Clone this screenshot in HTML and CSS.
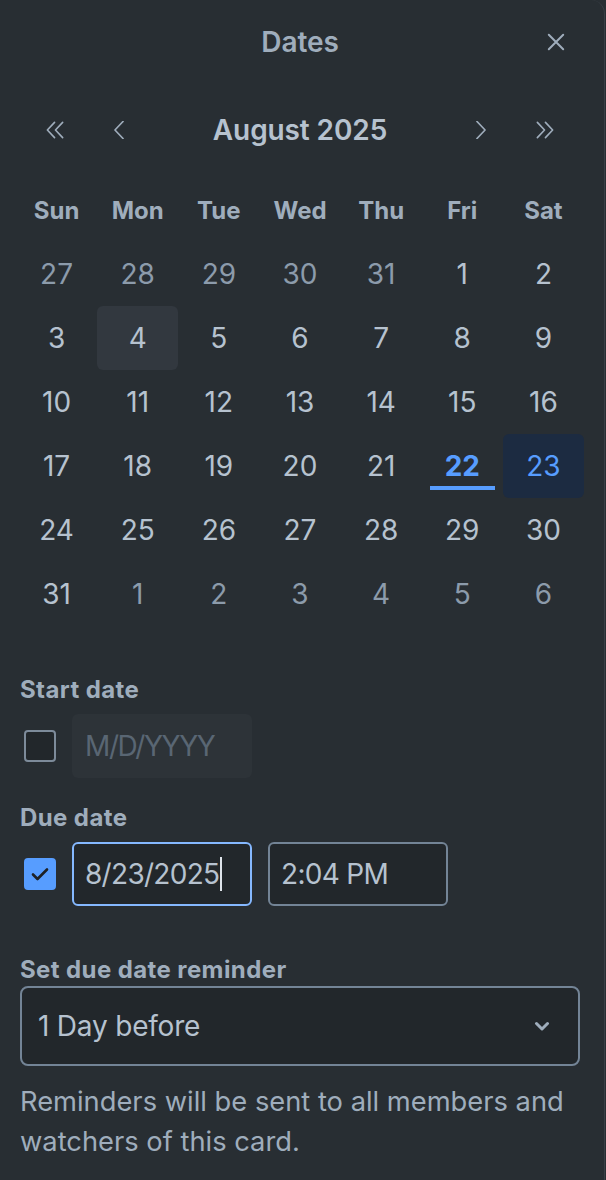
FILE: index.html
```html
<!DOCTYPE html>
<html lang="en">
<head>
<meta charset="utf-8">
<title>Dates</title>
<link rel="stylesheet" href="styles.css">
</head>
<body>
<div class="panel">
  <header class="head">
    <span class="head-spacer"></span>
    <h1 class="title">Dates</h1>
    <button class="icon-btn close" aria-label="Close">
      <svg width="20" height="20" viewBox="0 0 20 20"><path d="M2 2 L18 18 M18 2 L2 18" stroke="currentColor" stroke-width="2.2" stroke-linecap="round" fill="none"/></svg>
    </button>
  </header>

  <div class="nav">
    <button class="icon-btn nav-btn" aria-label="Previous year">
      <svg width="20" height="20" viewBox="0 0 20 20"><path d="M9.5 1.5 L1.5 10 L9.5 18.5 M18.5 1.5 L10.5 10 L18.5 18.5" stroke="currentColor" stroke-width="1.8" stroke-linecap="round" stroke-linejoin="round" fill="none"/></svg>
    </button>
    <button class="icon-btn nav-btn" aria-label="Previous month">
      <svg width="20" height="20" viewBox="0 0 20 20"><path d="M14.5 0.5 L5.5 10 L14.5 19.5" stroke="currentColor" stroke-width="1.8" stroke-linecap="round" stroke-linejoin="round" fill="none"/></svg>
    </button>
    <div class="month">August 2025</div>
    <button class="icon-btn nav-btn" aria-label="Next month">
      <svg width="20" height="20" viewBox="0 0 20 20"><path d="M5.5 0.5 L14.5 10 L5.5 19.5" stroke="currentColor" stroke-width="1.8" stroke-linecap="round" stroke-linejoin="round" fill="none"/></svg>
    </button>
    <button class="icon-btn nav-btn" aria-label="Next year">
      <svg width="20" height="20" viewBox="0 0 20 20"><path d="M1.5 1.5 L9.5 10 L1.5 18.5 M10.5 1.5 L18.5 10 L10.5 18.5" stroke="currentColor" stroke-width="1.8" stroke-linecap="round" stroke-linejoin="round" fill="none"/></svg>
    </button>
  </div>

  <div class="cal">
    <div class="wd">Sun</div><div class="wd">Mon</div><div class="wd">Tue</div><div class="wd">Wed</div><div class="wd">Thu</div><div class="wd">Fri</div><div class="wd">Sat</div>

    <div class="day out">27</div><div class="day out">28</div><div class="day out">29</div><div class="day out">30</div><div class="day out">31</div><div class="day">1</div><div class="day">2</div>
    <div class="day">3</div><div class="day hover">4</div><div class="day">5</div><div class="day">6</div><div class="day">7</div><div class="day">8</div><div class="day">9</div>
    <div class="day">10</div><div class="day">11</div><div class="day">12</div><div class="day">13</div><div class="day">14</div><div class="day">15</div><div class="day">16</div>
    <div class="day">17</div><div class="day">18</div><div class="day">19</div><div class="day">20</div><div class="day">21</div><div class="day today">22</div><div class="day selected">23</div>
    <div class="day">24</div><div class="day">25</div><div class="day">26</div><div class="day">27</div><div class="day">28</div><div class="day">29</div><div class="day">30</div>
    <div class="day">31</div><div class="day out">1</div><div class="day out">2</div><div class="day out">3</div><div class="day out">4</div><div class="day out">5</div><div class="day out">6</div>
  </div>

  <section class="field field-start">
    <div class="label">Start date</div>
    <div class="row">
      <span class="check"></span>
      <div class="input disabled">M/D/YYYY</div>
    </div>
  </section>

  <section class="field field-due">
    <div class="label">Due date</div>
    <div class="row">
      <span class="check checked">
        <svg width="18" height="14" viewBox="0 0 18 14"><path d="M2 7.5 L6.5 12 L16 2.5" stroke="currentColor" stroke-width="2.6" stroke-linecap="round" stroke-linejoin="round" fill="none"/></svg>
      </span>
      <div class="input focus">8/23/2025<span class="caret"></span></div>
      <div class="input">2:04 PM</div>
    </div>
  </section>

  <section class="field field-reminder">
    <div class="label">Set due date reminder</div>
    <div class="select">
      <span>1 Day before</span>
      <svg width="16" height="10" viewBox="0 0 16 10"><path d="M2.5 2.5 L8 8 L13.5 2.5" stroke="currentColor" stroke-width="3" stroke-linecap="round" stroke-linejoin="round" fill="none"/></svg>
    </div>
    <p class="help">Reminders will be sent to all members and watchers of this card.</p>
  </section>
</div>
</body>
</html>
```

FILE: styles.css
```css
* { box-sizing: border-box; }

html, body {
  margin: 0;
  padding: 0;
  background: #282e33;
}

body {
  font-family: Inter, "Noto Sans", "Liberation Sans", sans-serif;
  color: #b6c2cf;
  -webkit-font-smoothing: antialiased;
}

.panel {
  width: 605px;
  min-height: 1180px;
  padding: 0 24px 0 20px;
  background: #282e33;
  border-right: 1px solid #3a4047;
  border-top-right-radius: 14px;
}

.icon-btn {
  border: 0;
  background: transparent;
  color: #9fadbc;
  padding: 0;
  display: flex;
  align-items: center;
  justify-content: center;
  cursor: pointer;
}

/* header */
.head {
  height: 84px;
  display: grid;
  grid-template-columns: 48px 1fr 48px;
  align-items: center;
}
.title {
  margin: 0;
  text-align: center;
  font-size: 28px;
  font-weight: 600;
  line-height: 40px;
  color: #9fadbc;
  letter-spacing: -0.1px;
}
.close {
  width: 48px;
  height: 48px;
}
.close svg { width: 18px; height: 18px; }

/* month navigation */
.nav {
  margin-top: 14px;
  height: 64px;
  padding: 0 3px;
  display: flex;
  align-items: center;
}
.nav-btn {
  width: 64px;
  height: 64px;
}
.nav-btn svg { width: 18px; height: 18px; }
.month {
  flex: 1;
  text-align: center;
  font-size: 28px;
  font-weight: 600;
  color: #b6c2cf;
  letter-spacing: -0.1px;
}

/* calendar grid */
.cal {
  margin: 16px -4px 0;
  display: grid;
  grid-template-columns: repeat(7, 1fr);
  grid-auto-rows: 64px;
}
.wd {
  display: flex;
  align-items: center;
  justify-content: center;
  font-size: 24px;
  font-weight: 700;
  color: #9fadbc;
}
.day {
  position: relative;
  display: flex;
  align-items: center;
  justify-content: center;
  font-size: 28px;
  font-weight: 400;
  color: #b6c2cf;
  border-radius: 6px;
}
.day.out { color: #8c9bab; }
.day.hover { background: #32383f; }
.day.today {
  color: #579dff;
  font-weight: 700;
}
.day.today::after {
  content: "";
  position: absolute;
  left: 8px;
  right: 8px;
  bottom: 8px;
  height: 4px;
  background: #579dff;
}
.day.selected {
  background: #1c2b41;
  color: #579dff;
}

/* fields */
.field-start { margin-top: 48px; }
.field-due { margin-top: 24px; }
.field-reminder { margin-top: 48px; }

.label {
  font-size: 24px;
  font-weight: 700;
  line-height: 32px;
  color: #9fadbc;
  letter-spacing: 0.4px;
}
.field-start .label,
.field-due .label { margin-bottom: 8px; }

.row {
  display: flex;
  align-items: center;
  gap: 16px;
  padding-left: 4px;
}

.check {
  width: 32px;
  height: 32px;
  border: 2px solid #7d8b9a;
  border-radius: 4px;
  background: #22272b;
  display: flex;
  align-items: center;
  justify-content: center;
  flex: none;
}
.check.checked {
  background: #579dff;
  border-color: #579dff;
  color: #1d2125;
}

.input {
  width: 180px;
  height: 64px;
  border: 2px solid #738496;
  border-radius: 6px;
  background: #22272b;
  padding: 0 11px;
  display: flex;
  align-items: center;
  font-size: 28px;
  color: #b6c2cf;
  letter-spacing: -0.7px;
}
.input.disabled {
  background: #2d3338;
  border-color: transparent;
  color: #596673;
  letter-spacing: -1.4px;
}
.input.focus {
  border-color: #85b8ff;
}
.caret {
  width: 2px;
  height: 34px;
  background: #dee4ea;
  margin-left: 1px;
}

.select {
  height: 80px;
  border: 2px solid #738496;
  border-radius: 8px;
  background: #22272b;
  padding: 0 28px 0 16px;
  display: flex;
  align-items: center;
  justify-content: space-between;
  font-size: 28px;
  color: #b6c2cf;
  letter-spacing: -0.2px;
}
.select svg { color: #9fadbc; }

.help {
  margin: 16px 0 0;
  font-size: 27.3px;
  line-height: 40px;
  color: #9fadbc;
}
```
